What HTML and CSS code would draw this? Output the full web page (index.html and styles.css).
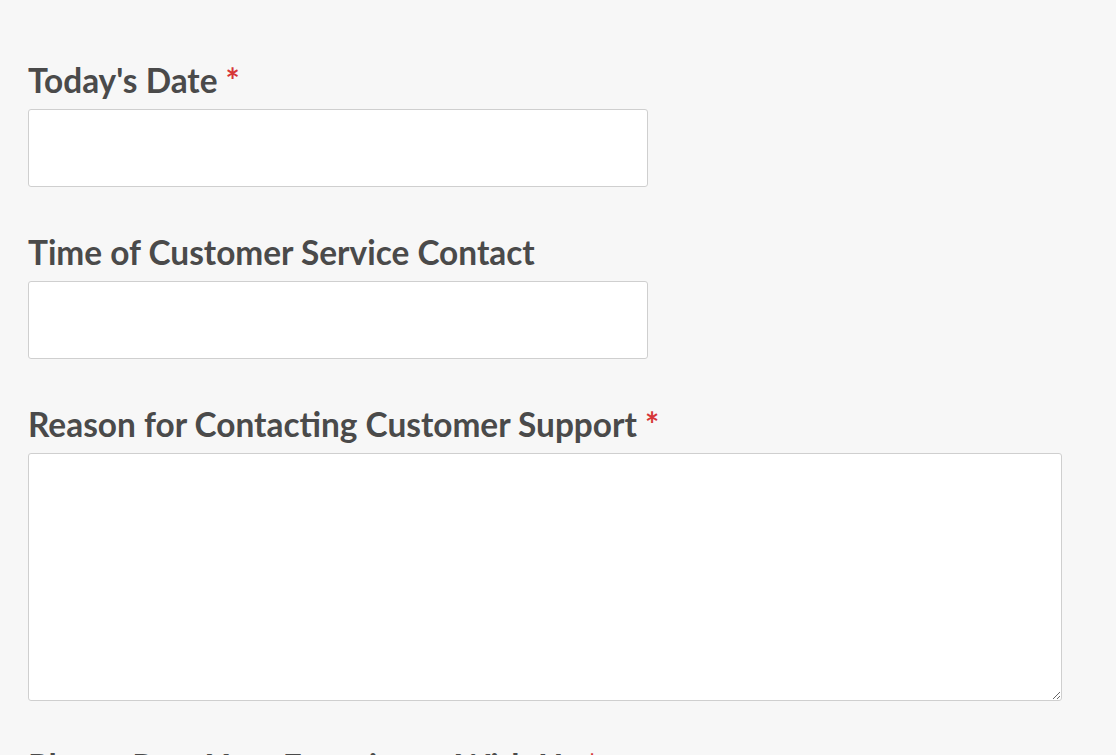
FILE: index.html
```html
<!DOCTYPE html>
<html lang="en">
<head>
<meta charset="utf-8">
<title>Customer Service Form</title>
<link rel="stylesheet" href="styles.css">
</head>
<body>
<form class="form">
  <div class="field">
    <label class="label" for="date">Today's Date <span class="req">*</span></label>
    <input class="input input-half" id="date" type="text">
  </div>
  <div class="field">
    <label class="label" for="time">Time of Customer Service Contact</label>
    <input class="input input-half" id="time" type="text">
  </div>
  <div class="field">
    <label class="label" for="reason">Reason for Contacting Customer Support <span class="req">*</span></label>
    <textarea class="input textarea" id="reason"></textarea>
  </div>
  <div class="field">
    <label class="label" for="rate">Please Rate Your Experience With Us <span class="req">*</span></label>
  </div>
</form>
</body>
</html>
```
FILE: styles.css
```css
html, body {
  margin: 0;
  padding: 0;
  background: #f7f7f7;
}
body {
  font-family: Lato, "Open Sans", Arial, sans-serif;
  color: #4a4a4a;
}
.form {
  padding: 60px 0 0 28px;
  display: flex;
  flex-direction: column;
  gap: 45px;
}
.field {
  display: flex;
  flex-direction: column;
  gap: 9px;
}
.label {
  font-family: Lato, sans-serif;
  font-weight: 700;
  font-size: 33.4px;
  line-height: 40px;
  color: #4a4a4a;
}
.req {
  color: #d63637;
  font-weight: 700;
}
.input {
  box-sizing: border-box;
  background: #fff;
  border: 1px solid #cfcfcf;
  border-radius: 3px;
  margin: 0;
  padding: 10px 14px;
  font: 16px Lato, sans-serif;
  color: #333;
  outline: none;
}
.input-half {
  width: 620px;
  height: 78px;
}
.textarea {
  width: 1034px;
  height: 248px;
  resize: vertical;
  display: block;
}
```
